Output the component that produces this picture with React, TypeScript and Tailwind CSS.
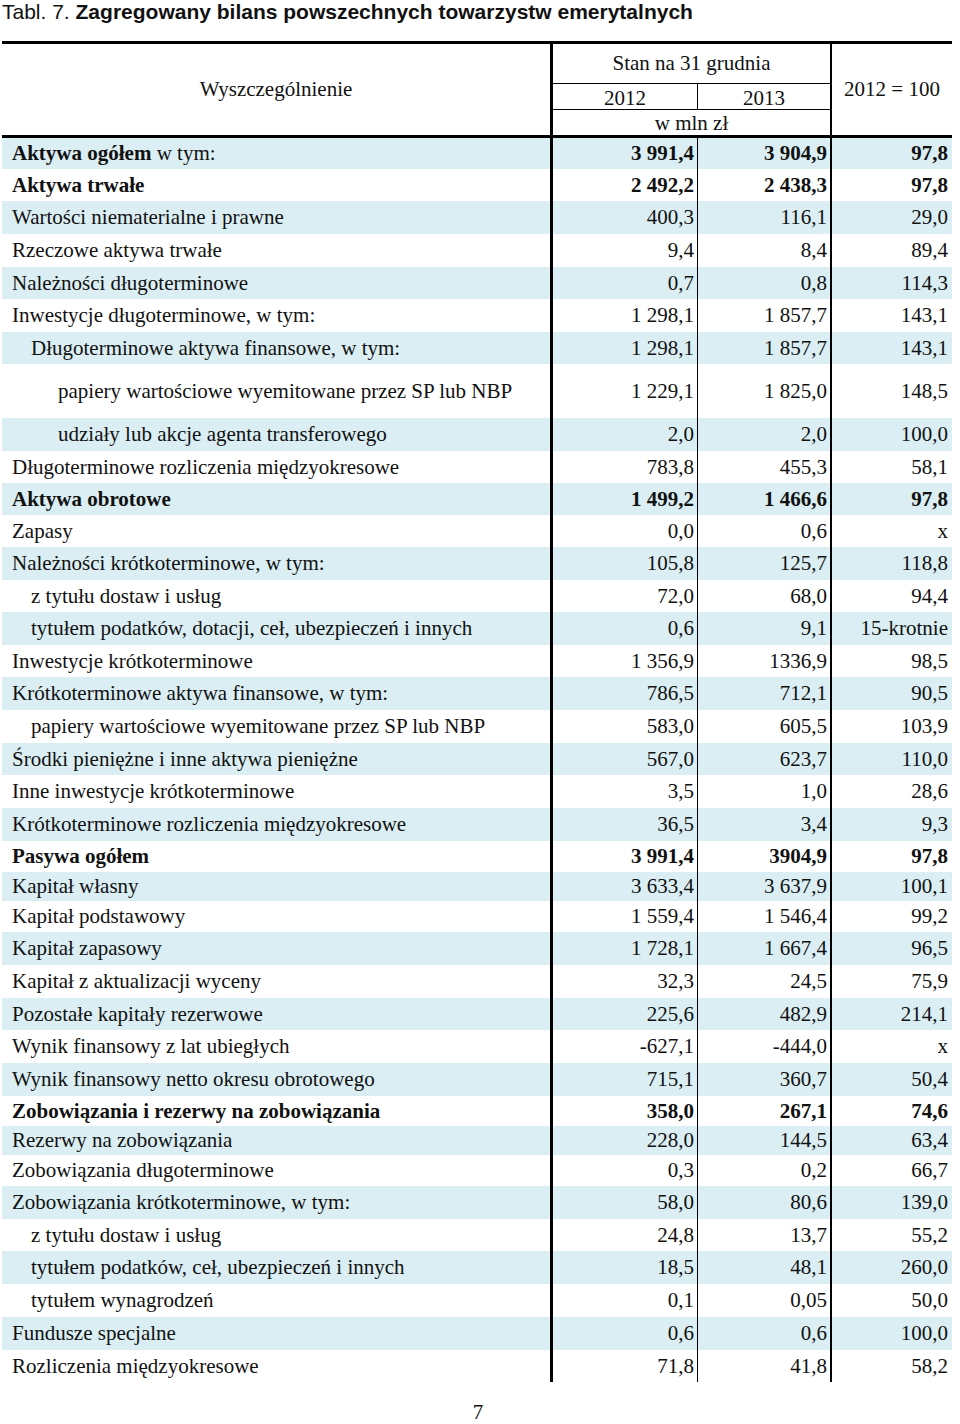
type Row = {
  label: string;
  lead?: string;
  a: string;
  b: string;
  c: string;
  h: string;
  indent?: 0 | 1 | 2;
  bold?: boolean;
};

const rows: Row[] = [
  { lead: "Aktywa ogółem", label: " w tym:", a: "3 991,4", b: "3 904,9", c: "97,8", h: "h-[31px]", bold: true },
  { label: "Aktywa trwałe", a: "2 492,2", b: "2 438,3", c: "97,8", h: "h-[32px]", bold: true },
  { label: "Wartości niematerialne i prawne", a: "400,3", b: "116,1", c: "29,0", h: "h-[33px]" },
  { label: "Rzeczowe aktywa trwałe", a: "9,4", b: "8,4", c: "89,4", h: "h-[33px]" },
  { label: "Należności długoterminowe", a: "0,7", b: "0,8", c: "114,3", h: "h-[32px]" },
  { label: "Inwestycje długoterminowe, w tym:", a: "1 298,1", b: "1 857,7", c: "143,1", h: "h-[33px]" },
  { label: "Długoterminowe aktywa finansowe, w tym:", a: "1 298,1", b: "1 857,7", c: "143,1", h: "h-[32px]", indent: 1 },
  { label: "papiery wartościowe wyemitowane przez SP lub NBP", a: "1 229,1", b: "1 825,0", c: "148,5", h: "h-[54px]", indent: 2 },
  { label: "udziały lub akcje agenta transferowego", a: "2,0", b: "2,0", c: "100,0", h: "h-[33px]", indent: 2 },
  { label: "Długoterminowe rozliczenia międzyokresowe", a: "783,8", b: "455,3", c: "58,1", h: "h-[32px]" },
  { label: "Aktywa obrotowe", a: "1 499,2", b: "1 466,6", c: "97,8", h: "h-[32px]", bold: true },
  { label: "Zapasy", a: "0,0", b: "0,6", c: "x", h: "h-[32px]" },
  { label: "Należności krótkoterminowe, w tym:", a: "105,8", b: "125,7", c: "118,8", h: "h-[33px]" },
  { label: "z tytułu dostaw i usług", a: "72,0", b: "68,0", c: "94,4", h: "h-[32px]", indent: 1 },
  { label: "tytułem podatków, dotacji, ceł, ubezpieczeń i innych", a: "0,6", b: "9,1", c: "15-krotnie", h: "h-[33px]", indent: 1 },
  { label: "Inwestycje krótkoterminowe", a: "1 356,9", b: "1336,9", c: "98,5", h: "h-[32px]" },
  { label: "Krótkoterminowe aktywa finansowe, w tym:", a: "786,5", b: "712,1", c: "90,5", h: "h-[33px]" },
  { label: "papiery wartościowe wyemitowane przez SP lub NBP", a: "583,0", b: "605,5", c: "103,9", h: "h-[33px]", indent: 1 },
  { label: "Środki pieniężne i inne aktywa pieniężne", a: "567,0", b: "623,7", c: "110,0", h: "h-[32px]" },
  { label: "Inne inwestycje krótkoterminowe", a: "3,5", b: "1,0", c: "28,6", h: "h-[33px]" },
  { label: "Krótkoterminowe rozliczenia międzyokresowe", a: "36,5", b: "3,4", c: "9,3", h: "h-[33px]" },
  { label: "Pasywa ogółem", a: "3 991,4", b: "3904,9", c: "97,8", h: "h-[31px]", bold: true },
  { label: "Kapitał własny", a: "3 633,4", b: "3 637,9", c: "100,1", h: "h-[29px]" },
  { label: "Kapitał podstawowy", a: "1 559,4", b: "1 546,4", c: "99,2", h: "h-[31px]" },
  { label: "Kapitał zapasowy", a: "1 728,1", b: "1 667,4", c: "96,5", h: "h-[33px]" },
  { label: "Kapitał z aktualizacji wyceny", a: "32,3", b: "24,5", c: "75,9", h: "h-[33px]" },
  { label: "Pozostałe kapitały rezerwowe", a: "225,6", b: "482,9", c: "214,1", h: "h-[32px]" },
  { label: "Wynik finansowy z lat ubiegłych", a: "-627,1", b: "-444,0", c: "x", h: "h-[33px]" },
  { label: "Wynik finansowy netto okresu obrotowego", a: "715,1", b: "360,7", c: "50,4", h: "h-[33px]" },
  { label: "Zobowiązania i rezerwy na zobowiązania", a: "358,0", b: "267,1", c: "74,6", h: "h-[30px]", bold: true },
  { label: "Rezerwy na zobowiązania", a: "228,0", b: "144,5", c: "63,4", h: "h-[29px]" },
  { label: "Zobowiązania długoterminowe", a: "0,3", b: "0,2", c: "66,7", h: "h-[31px]" },
  { label: "Zobowiązania krótkoterminowe, w tym:", a: "58,0", b: "80,6", c: "139,0", h: "h-[33px]" },
  { label: "z tytułu dostaw i usług", a: "24,8", b: "13,7", c: "55,2", h: "h-[32px]", indent: 1 },
  { label: "tytułem podatków, ceł, ubezpieczeń i innych", a: "18,5", b: "48,1", c: "260,0", h: "h-[33px]", indent: 1 },
  { label: "tytułem wynagrodzeń", a: "0,1", b: "0,05", c: "50,0", h: "h-[33px]", indent: 1 },
  { label: "Fundusze specjalne", a: "0,6", b: "0,6", c: "100,0", h: "h-[33px]" },
  { label: "Rozliczenia międzyokresowe", a: "71,8", b: "41,8", c: "58,2", h: "h-[32px]" },
];

const indentClass = ["pl-[10px]", "pl-[29px]", "pl-[56px]"];

function DataRow({ row, shaded }: { row: Row; shaded: boolean }) {
  const bg = shaded ? "bg-[#daeef3]" : "bg-white";
  const weight = row.bold ? "font-bold" : "font-normal";
  return (
    <div className={`grid grid-cols-[551px_145px_134px_120px] ${row.h}`}>
      <div className={`flex items-center border-r-[3px] border-black whitespace-nowrap ${bg} ${indentClass[row.indent ?? 0]}`}>
        {row.lead ? (
          <span>
            <span className="font-bold">{row.lead}</span>
            {row.label}
          </span>
        ) : (
          <span className={weight}>{row.label}</span>
        )}
      </div>
      <div className={`flex items-center justify-end border-r-[1.5px] border-black pr-[3px] ${bg} ${weight}`}>
        {row.a}
      </div>
      <div className={`flex items-center justify-end border-r-2 border-black pr-[3px] ${bg} ${weight}`}>
        {row.b}
      </div>
      <div className={`flex items-center justify-end pr-[4px] whitespace-nowrap ${bg} ${weight}`}>{row.c}</div>
    </div>
  );
}

export default function App() {
  return (
    <div className="w-[960px] h-[1424px] bg-white text-[#111] font-['Liberation_Serif','Times_New_Roman',serif] text-[21px] leading-none overflow-hidden">
      {/* Title */}
      <div className="pl-[2px] pt-[1px] h-[41px] font-['Liberation_Sans',Arial,sans-serif] text-[21px] leading-[22px]">
        Tabl. 7. <span className="font-bold">Zagregowany bilans powszechnych towarzystw emerytalnych</span>
      </div>

      <div className="ml-[2px] w-[950px]">
        {/* Header */}
        <div className="grid grid-cols-[551px_279px_120px] h-[97px] border-y-[3px] border-black">
          <div className="flex items-center justify-center border-r-[3px] border-black">
            Wyszczególnienie
          </div>
          <div className="flex flex-col border-r-2 border-black">
            <div className="h-[40px] flex items-center justify-center border-b-[1.5px] border-black">
              Stan na 31 grudnia
            </div>
            <div className="h-[26px] grid grid-cols-[145px_132px] border-b-[1.5px] border-black">
              <div className="flex items-center justify-center border-r-[1.5px] border-black pt-[3px]">2012</div>
              <div className="flex items-center justify-center pt-[3px]">2013</div>
            </div>
            <div className="flex-1 flex items-center justify-center pt-[1px]">w mln zł</div>
          </div>
          <div className="flex items-center justify-center">2012 = 100</div>
        </div>

        {/* Body */}
        {rows.map((row, i) => (
          <DataRow key={i} row={row} shaded={i % 2 === 0} />
        ))}
      </div>

      <div className="mt-[20px] text-center pr-[4px]">7</div>
    </div>
  );
}
